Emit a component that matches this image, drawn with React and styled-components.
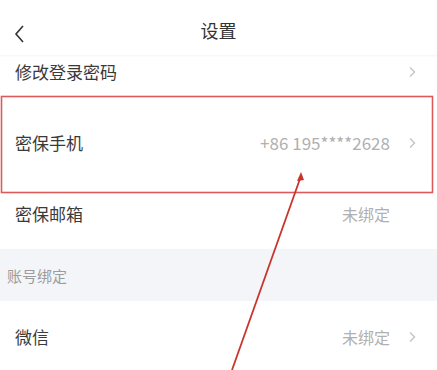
import React from "react";
import styled, { createGlobalStyle } from "styled-components";

const GlobalStyle = createGlobalStyle`
  html, body {
    margin: 0;
    padding: 0;
    background: #fff;
    font-family: "Noto Sans CJK SC", "Noto Sans", sans-serif;
  }
`;

const Page = styled.div`
  position: relative;
  width: 437px;
  height: 370px;
  overflow: hidden;
  background: #fff;
`;

const Header = styled.div`
  position: relative;
  z-index: 2;
  height: 55px;
  display: flex;
  align-items: center;
  justify-content: center;
  background: #fff;
  box-shadow: 0 1px 2px rgba(0, 0, 0, 0.05);
`;

const Back = styled.div`
  position: absolute;
  left: 12px;
  top: 23px;
  width: 16px;
  height: 22px;
`;

const Title = styled.div`
  font-size: 18px;
  color: #333;
  margin-top: 4px;
`;

const List = styled.div`
  margin-top: -19px;
`;

const Row = styled.div`
  height: 71px;
  display: flex;
  align-items: center;
  padding: 0 21px 0 15px;
  background: #fff;
`;

const Label = styled.div`
  flex: 1;
  font-size: 17px;
  color: #3a3a3a;
`;

const Value = styled.div`
  font-size: ${(p) => (p.$num ? "17px" : "16px")};
  color: #b0b0b0;
  margin-right: ${(p) => (p.$arrow ? "18px" : "26px")};
`;

const Section = styled.div`
  height: 52px;
  display: flex;
  align-items: center;
  padding-left: 7px;
  background: #f3f5f8;
  font-size: 15px;
  color: #9c9c9c;
`;

const Overlay = styled.svg`
  position: absolute;
  left: 0;
  top: 0;
  pointer-events: none;
  z-index: 3;
`;

const Chevron = () => (
  <svg width="8" height="12" viewBox="0 0 8 12">
    <path d="M2 1.5 L6.5 6 L2 10.5" fill="none" stroke="#c4c4c4" strokeWidth="1.4" />
  </svg>
);

const rows = [
  { label: "修改登录密码", arrow: true },
  { label: "密保手机", value: "+86 195****2628", arrow: true, num: true },
  { label: "密保邮箱", value: "未绑定" },
];

export default function App() {
  return (
    <Page>
      <GlobalStyle />
      <Header>
        <Back>
          <svg width="16" height="22" viewBox="0 0 16 22">
            <path d="M11 3 L4 11 L11 19" fill="none" stroke="#333" strokeWidth="1.6" />
          </svg>
        </Back>
        <Title>设置</Title>
      </Header>
      <List>
        {rows.map((r) => (
          <Row key={r.label}>
            <Label>{r.label}</Label>
            {r.value && (
              <Value $arrow={r.arrow} $num={r.num}>
                {r.value}
              </Value>
            )}
            {r.arrow && <Chevron />}
          </Row>
        ))}
        <Section>账号绑定</Section>
        <Row>
          <Label>微信</Label>
          <Value $arrow>未绑定</Value>
          <Chevron />
        </Row>
      </List>
      <Overlay width="437" height="370" viewBox="0 0 437 370">
        <rect x="1.5" y="96.5" width="431" height="96" fill="none" stroke="#dd5a5a" strokeWidth="1.6" />
        <line x1="232" y1="370" x2="301" y2="176" stroke="#c8352c" strokeWidth="1.8" />
        <path d="M301 172 L297 181 L304 180 Z" fill="#c8352c" />
      </Overlay>
    </Page>
  );
}
